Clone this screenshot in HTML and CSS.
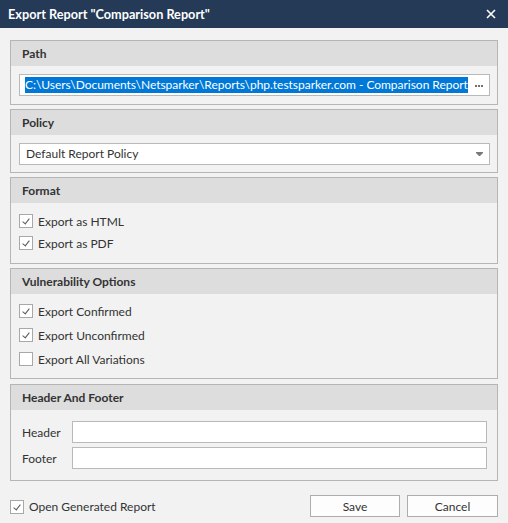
FILE: index.html
```html
<!DOCTYPE html>
<html>
<head>
<meta charset="utf-8">
<link rel="stylesheet" href="styles.css">
</head>
<body>
<div class="window">
  <div class="titlebar">
    <span class="title">Export Report "Comparison Report"</span>
    <svg class="close" width="10" height="10" viewBox="0 0 10 10"><path d="M1 1 L9 9 M9 1 L1 9" stroke="#ffffff" stroke-width="1.6" fill="none"/></svg>
  </div>
  <div class="content">
    <section class="group g-path">
      <div class="group-head">Path</div>
      <div class="group-body">
        <div class="field">
          <span class="selected">C:\Users\Documents\Netsparker\Reports\php.testsparker.com - Comparison Report</span>
          <svg class="dots" width="9" height="3" viewBox="0 0 9 3"><rect x="0" y="0" width="2" height="2" fill="#707070"/><rect x="3" y="0" width="2" height="2" fill="#707070"/><rect x="6" y="0" width="2" height="2" fill="#707070"/></svg>
        </div>
      </div>
    </section>
    <section class="group g-policy">
      <div class="group-head">Policy</div>
      <div class="group-body">
        <div class="field select">
          <span class="value">Default Report Policy</span>
          <svg class="arrow" width="7" height="4" viewBox="0 0 7 4"><path d="M0 0 H7 V1 L4 4 H3 L0 1 Z" fill="#7a7a7a"/></svg>
        </div>
      </div>
    </section>
    <section class="group g-format">
      <div class="group-head">Format</div>
      <div class="group-body checks">
        <label class="check"><span class="box checked"></span>Export as HTML</label>
        <label class="check"><span class="box checked"></span>Export as PDF</label>
      </div>
    </section>
    <section class="group g-vuln">
      <div class="group-head">Vulnerability Options</div>
      <div class="group-body checks">
        <label class="check"><span class="box checked"></span>Export Confirmed</label>
        <label class="check"><span class="box checked"></span>Export Unconfirmed</label>
        <label class="check"><span class="box"></span>Export All Variations</label>
      </div>
    </section>
    <section class="group g-hf">
      <div class="group-head">Header And Footer</div>
      <div class="group-body form">
        <div class="form-row"><span class="form-label">Header</span><div class="field text"></div></div>
        <div class="form-row"><span class="form-label">Footer</span><div class="field text"></div></div>
      </div>
    </section>
    <div class="footer-bar">
      <label class="check open"><span class="box checked"></span>Open Generated Report</label>
      <div class="buttons">
        <button class="btn save">Save</button>
        <button class="btn cancel">Cancel</button>
      </div>
    </div>
  </div>
</div>
</body>
</html>
```
FILE: styles.css
```css
html, body {
  margin: 0;
  padding: 0;
}
body {
  width: 508px;
  height: 523px;
  background: #f2f2f2;
  font-family: "Lato", "Liberation Sans", sans-serif;
  font-size: 12px;
  color: #333333;
  overflow: hidden;
}
.window {
  display: flex;
  flex-direction: column;
  height: 523px;
}
.titlebar {
  height: 28px;
  background: #243a56;
  display: flex;
  align-items: center;
  justify-content: space-between;
  padding: 0 12px 0 8px;
  flex: none;
}
.title {
  color: #ffffff;
  font-weight: 700;
  font-size: 12.7px;
  line-height: 28px;
  white-space: nowrap;
}
.close {
  display: block;
  margin-top: -1px;
}
.content {
  padding: 12px 10px 0 10px;
  display: flex;
  flex-direction: column;
}
.group {
  border: 1px solid #b5b5b5;
  background: #f2f2f2;
  margin-bottom: 4px;
}
.group-head {
  height: 25px;
  line-height: 25px;
  background: #dddddd;
  padding-left: 11px;
  font-weight: 700;
  color: #333333;
}
.group-body {
  padding: 8px 7px 8px 8px;
}
.g-policy .group-body {
  padding-bottom: 7px;
}
.field {
  height: 22px;
  box-sizing: border-box;
  border: 1px solid #b9b9b9;
  background: #ffffff;
  display: flex;
  align-items: center;
}
.g-path .field {
  padding: 0 5px 0 5px;
  justify-content: space-between;
}
.selected {
  background: #0078d7;
  color: #ffffff;
  line-height: 16px;
  height: 16px;
  white-space: nowrap;
  overflow: hidden;
  letter-spacing: -0.03px;
}
.dots {
  display: block;
  margin-top: 2px;
}
.select {
  padding: 0 6px 0 6px;
  justify-content: space-between;
}
.select .value {
  line-height: 20px;
}
.arrow {
  display: block;
  margin-right: 0;
}
.checks {
  padding: 0 8px;
  display: flex;
  flex-direction: column;
}
.g-format .checks {
  padding-top: 7px;
  padding-bottom: 9px;
}
.g-format .check {
  height: 22px;
}
.g-vuln .checks {
  padding-top: 5px;
  padding-bottom: 7px;
}
.g-vuln .check {
  height: 24px;
}
.check {
  display: flex;
  align-items: center;
  white-space: nowrap;
}
.box {
  width: 14px;
  height: 14px;
  box-sizing: border-box;
  border: 1px solid #a8a8a8;
  background: #ffffff;
  margin-right: 5px;
  position: relative;
  flex: none;
}
.box.checked::after {
  content: "";
  position: absolute;
  left: 4px;
  top: 2px;
  width: 3px;
  height: 6px;
  border-right: 1px solid #5a5a5a;
  border-bottom: 1px solid #5a5a5a;
  transform: rotate(38deg);
}
.g-hf {
  margin-top: 1px;
  margin-bottom: 0;
}
.form {
  padding: 11px 10px 11px 11px;
  display: flex;
  flex-direction: column;
  gap: 4px;
}
.form-row {
  display: flex;
  align-items: center;
}
.form-label {
  width: 50px;
  flex: none;
}
.field.text {
  flex: 1;
}
.footer-bar {
  display: flex;
  align-items: center;
  justify-content: space-between;
  padding-top: 14px;
}
.open {
  margin-top: 1px;
}
.buttons {
  display: flex;
  gap: 7px;
}
.btn {
  height: 22px;
  box-sizing: border-box;
  border: 1px solid #adadad;
  background: #fdfdfd;
  font-family: "Lato", "Liberation Sans", sans-serif;
  font-size: 12px;
  color: #333333;
  padding: 0;
}
.save {
  width: 90px;
}
.cancel {
  width: 91px;
}
```
